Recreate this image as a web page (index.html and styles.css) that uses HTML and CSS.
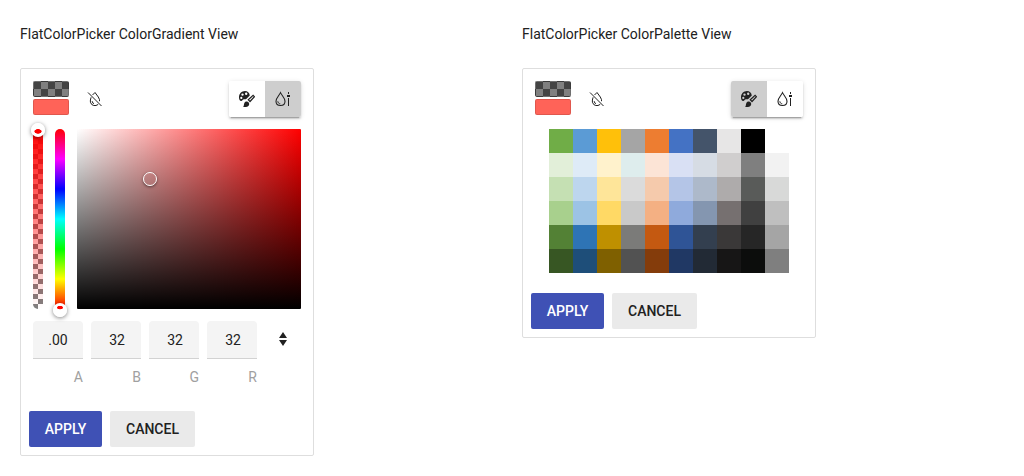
FILE: index.html
```html
<!DOCTYPE html>
<html lang="en">
<head>
<meta charset="utf-8">
<title>FlatColorPicker</title>
<link rel="stylesheet" href="styles.css">
</head>
<body>
<svg class="symbols" aria-hidden="true">
  <symbol id="clear" viewBox="0 0 16 16">
    <path d="M1 1.500 14.500 15M5.500 4 8 1.500l3.300 4.500 1.200 2.600v1.600M4.100 6.300 3.400 9v2.200l1.400 2.400 2 .9h2.200l2.200-1.100M5.200 10.200l.5 1.700 1.300.7" fill="none" stroke="currentColor" stroke-width="1"/>
  </symbol>
  <symbol id="palette" viewBox="0 0 16 16">
    <path fill="currentColor" fill-rule="evenodd" d="M6 0C2.600 0 0 2.800 0 6.300 0 8.500.8 10 2.200 10c1.500 0 1.200-1.700 2.800-1.700H7L10.800 4.500C10.400 1.700 8.600 0 6 0ZM3.500 2.400a1.200 1.200 0 1 1 0 2.400 1.200 1.200 0 0 1 0-2.400ZM7.200 1.600a1.200 1.200 0 1 1 0 2.400 1.200 1.200 0 0 1 0-2.400ZM2.300 5.800a1.100 1.100 0 1 1 0 2.200 1.100 1.100 0 0 1 0-2.200Z"/>
    <path fill="currentColor" d="M4 15.800c1.400-1 .6-2.500 1.400-3.900C6.300 10.200 8.600 10 9.700 11.500c1 1.500.4 3.300-1 4-1.300.7-3.200.7-4.700.3Z"/>
    <path d="m9.300 8.700 4.800-4.300 1.300 1.300-4.400 4.800Z" fill="none" stroke="currentColor" stroke-width="1.200"/>
  </symbol>
  <symbol id="gradient" viewBox="0 0 16 16">
    <path d="M5.500 1.600C4.200 4.500 1 7 1 10.200c0 2.700 1.900 4.300 4.500 4.300s4.500-1.600 4.500-4.300C10 7 6.800 4.500 5.500 1.600Z" fill="none" stroke="currentColor" stroke-width="1.100"/>
    <path d="M2.800 10.300c.2 1.500 1.100 2.400 2.500 2.600" fill="none" stroke="currentColor"/>
    <path d="M13 1h1v2h-1zM12 4h3v2h-3zM13 7h1v8h-1z" fill="currentColor"/>
  </symbol>
</svg>
<main class="demo">
  <section class="column">
    <h1 class="title">FlatColorPicker ColorGradient View</h1>
    <div class="picker">
      <header class="header">
        <div class="previews"><span class="preview checker"></span><span class="preview current"></span></div>
        <svg class="icon clear"><use href="#clear"/></svg>
        <div class="views">
          <span class="view"><svg class="icon"><use href="#palette"/></svg></span>
          <span class="view selected"><svg class="icon"><use href="#gradient"/></svg></span>
        </div>
      </header>
      <div class="canvas">
        <div class="slider alpha"><span class="handle top"></span></div>
        <div class="slider hue"><span class="handle bottom"></span></div>
        <div class="spectrum"><span class="pointer"></span></div>
      </div>
      <div class="inputs">
        <label class="channel"><span class="value">.00</span><span class="name">A</span></label>
        <label class="channel"><span class="value number">32</span><span class="name">B</span></label>
        <label class="channel"><span class="value number">32</span><span class="name">G</span></label>
        <label class="channel"><span class="value number">32</span><span class="name">R</span></label>
        <svg class="toggle" viewBox="0 0 16 16"><path d="M4 7 8 1l4 6zM4 9h8l-4 6z" fill="currentColor"/></svg>
      </div>
      <footer class="actions"><button class="button primary">APPLY</button><button class="button">CANCEL</button></footer>
    </div>
  </section>
  <section class="column">
    <h1 class="title">FlatColorPicker ColorPalette View</h1>
    <div class="picker">
      <header class="header">
        <div class="previews"><span class="preview checker"></span><span class="preview current"></span></div>
        <svg class="icon clear"><use href="#clear"/></svg>
        <div class="views">
          <span class="view selected"><svg class="icon"><use href="#palette"/></svg></span>
          <span class="view"><svg class="icon"><use href="#gradient"/></svg></span>
        </div>
      </header>
      <div class="palette" id="swatches"></div>
      <footer class="actions"><button class="button primary">APPLY</button><button class="button">CANCEL</button></footer>
    </div>
  </section>
</main>
<script src="palette.js"></script>
</body>
</html>
```
FILE: styles.css
```css
* { box-sizing: border-box; }
body { margin: 0; background: #fff; color: #212121; font: 14px/20px Roboto, sans-serif; }
.symbols { display: none; }
.demo { display: grid; grid-template-columns: 502px 1fr; padding: 24px 0 0 20px; }
.title { margin: 0 0 24px; font-size: 14px; line-height: 20px; font-weight: 400; }
.picker { width: 294px; border: 1px solid #dedede; border-radius: 2px; }
.header { display: flex; align-items: center; height: 60px; padding: 12px; }
.previews { display: grid; gap: 2px; width: 36px; margin-right: 18px; padding-bottom: 2px; }
.preview { height: 16px; border: 1px solid rgba(0, 0, 0, .12); border-radius: 2px; }
.current { background: #ff6358; }
.checker { background: repeating-conic-gradient(#808080 0 25%, #444 0 50%) 0 0 / 14px 14px; }
.icon { width: 16px; height: 16px; display: block; }
.views { display: flex; margin-left: auto; border-radius: 2px; overflow: hidden; box-shadow: 0 3px 1px -2px rgba(0,0,0,.2), 0 2px 2px rgba(0,0,0,.14), 0 1px 5px rgba(0,0,0,.12); }
.view { display: grid; place-items: center; width: 36px; height: 36px; background: #fff; }
.view.selected { background: #cecece; }
.canvas { display: grid; grid-template-columns: 10px 10px 224px; gap: 12px; height: 180px; margin: 0 12px; }
.slider { position: relative; border-radius: 5px; }
.alpha { background: linear-gradient(#f00, rgba(255,0,0,0)), repeating-conic-gradient(#808080 0 25%, #fff 0 50%) 0 0 / 10px 10px; }
.hue { background: linear-gradient(#f00, #f0f 16.67%, #00f 33.33%, #0ff 50%, #0f0 66.67%, #ff0 83.33%, #f00); }
.handle { position: absolute; left: -2px; width: 14px; height: 14px; border-radius: 50%; background: radial-gradient(ellipse 4px 2.5px at 50% 60%, #f00 80%, #fff 100%); box-shadow: 0 1px 4px rgba(0,0,0,.5); }
.handle.top { top: -6px; }
.handle.bottom { top: 174px; background: radial-gradient(ellipse 3.5px 2px at 50% 33%, #f00 70%, #fff 100%); }
.spectrum { position: relative; background: linear-gradient(transparent, #000), linear-gradient(to right, #fff, #f00); border-radius: 1px; }
.pointer { position: absolute; left: 66px; top: 43px; width: 14px; height: 14px; border: 1px solid #fff; border-radius: 50%; box-shadow: 0 1px 3px rgba(0,0,0,.5); }
.inputs { display: flex; gap: 8px; margin: 12px 12px 0; }
.channel { width: 50px; }
.value { display: flex; align-items: center; justify-content: center; height: 38px; background: #f4f4f4; border-bottom: 1px solid #d2d2d2; border-radius: 4px 4px 0 0; }
.number { padding-left: 2px; }
.name { display: block; height: 20px; margin-top: 8px; text-align: right; color: #a0a0a0; }
.toggle { width: 16px; height: 16px; margin: 10px; }
.actions { display: flex; gap: 8px; padding: 24px 8px 8px; }
.palette + .actions { padding-top: 20px; }
.button { width: 85px; height: 36px; padding: 0; border: 0; border-radius: 2px; font: 500 14px/20px Roboto, sans-serif; background: #eaeaea; color: #212121; }
.button.primary { width: 73px; background: #3f51b5; color: #fff; }
.palette { display: grid; grid-template-columns: repeat(10, 24px); grid-auto-rows: 24px; justify-content: center; }
```
FILE: palette.js
```js
const colors = `70ad47 5b9bd5 ffc00a a5a5a5 ed7d31 4472c4 44546a e7e6e6 000000 ffffff
e2efd9 deebf7 fff2cc deeded fce4d6 d9e0f4 d6dce4 d0cece 7f7f7f f2f2f2
c5e0b3 bdd6ee fee599 dbdbdb f5caac b4c5e7 adb9ca aeabab 595b59 d8d9d8
a8d08d 9cc3e5 ffd965 c9c9c9 f4b083 8faadc 8496b0 767070 404040 bfbfbf
538135 2e74b5 bf9000 7b7b79 c45911 2f5496 333f4f 3a3838 262626 a5a5a5
375623 1e4e79 7f6000 525252 843c0b 203864 222a35 171616 0c0d0c 7f7f7f`.split(/\s+/);
const grid = document.getElementById("swatches");
for (const color of colors) {
  const cell = document.createElement("span");
  cell.style.background = "#" + color;
  grid.append(cell);
}
```
